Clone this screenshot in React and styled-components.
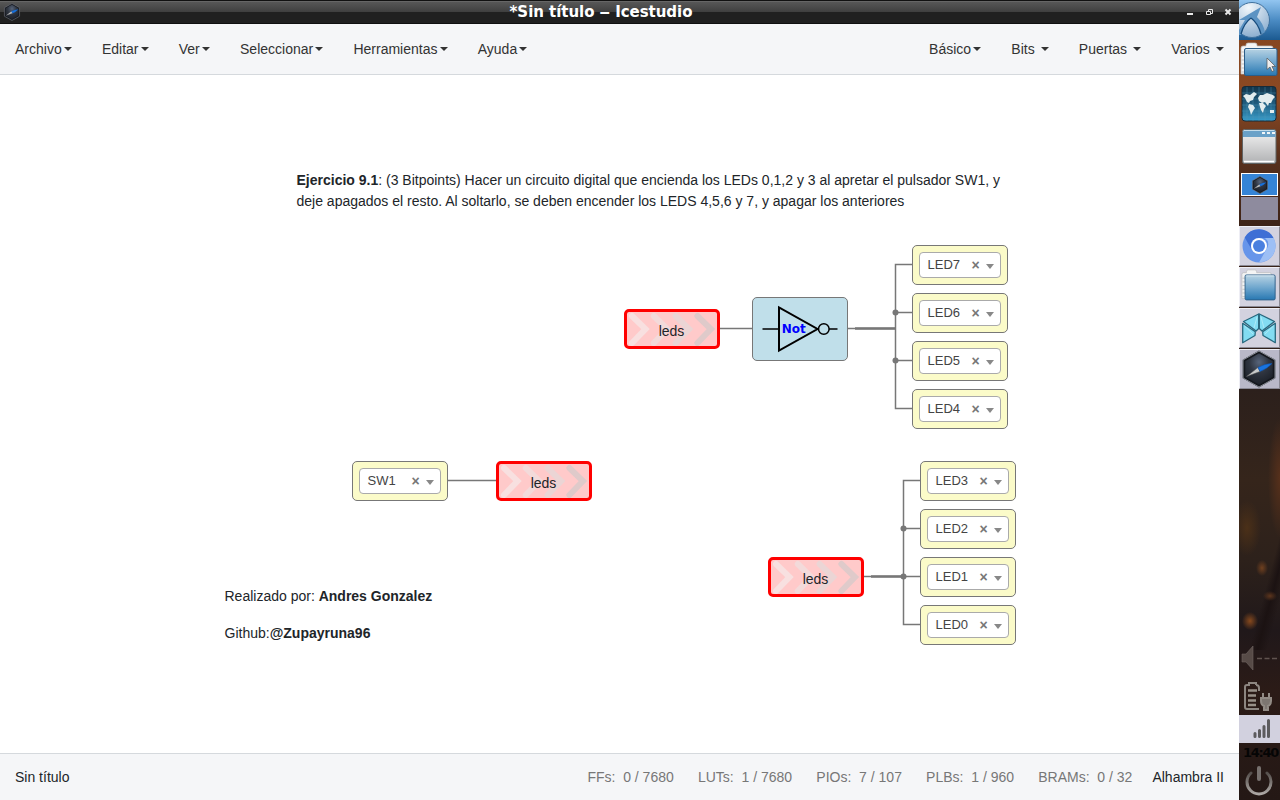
import React from "react";
import styled, { createGlobalStyle } from "styled-components";

const GlobalStyle = createGlobalStyle`
  * { box-sizing: border-box; }
  html, body, #root { margin: 0; height: 100%; overflow: hidden; }
  body {
    font-family: "Liberation Sans", Arial, sans-serif;
    font-size: 14px;
    line-height: 20px;
    color: #212529;
    background: #fff;
  }
`;

const Desktop = styled.div`
  display: flex;
  width: 1280px;
  height: 800px;
`;

const Window = styled.div`
  display: flex;
  flex-direction: column;
  width: 1239px;
  height: 800px;
  background: #fff;
`;

const TitleBar = styled.header`
  display: flex;
  align-items: center;
  height: 24px;
  padding: 0 7px 0 3px;
  background: linear-gradient(#111 0, #111 1px, #757575 1px, #575757 2px, #3f3f3f 12px, #202020 12px, #202020 23px, #101010 23px);
`;

const Title = styled.h1`
  flex: 1;
  margin: 0;
  padding-right: 5px;
  text-align: center;
  font: bold 15px/22px "DejaVu Sans", sans-serif;
  letter-spacing: -0.04px;
  color: #fff;
  white-space: pre;
`;

const WindowControls = styled.div`
  display: flex;
  width: 46px;
  height: 24px;
`;

const MenuBar = styled.nav`
  display: flex;
  justify-content: space-between;
  height: 51px;
  background: #f5f6f8;
  border-bottom: 1px solid #d5d9dd;
`;

const MenuGroup = styled.div`
  display: flex;
`;

const MenuItem = styled.div`
  display: flex;
  align-items: center;
  padding: 0 15px;
  color: #333;
  white-space: pre;

  &::after {
    content: "";
    margin-left: 2.25px;
    border: 4px solid transparent;
    border-top-color: #333;
    border-bottom: 0;
  }
`;

const Canvas = styled.main`
  position: relative;
  flex: 1;
  overflow: hidden;
`;

const Wires = styled.svg`
  position: absolute;
  inset: 0;
`;

const Placed = styled.div`
  position: absolute;
  left: ${(p) => p.$x}px;
  top: ${(p) => p.$y}px;
`;

const Note = styled.div`
  line-height: 21px;
  white-space: nowrap;
  p { margin: 0 0 16px; }
`;

const PinFrame = styled.div`
  width: 96px;
  height: 40px;
  padding: 6px;
  background: #fbfbc9;
  border: 1px solid #777;
  border-radius: 5px;
`;

const PinSelect = styled.div`
  display: flex;
  align-items: center;
  height: 26px;
  padding: 0 6px 0 7.5px;
  background: #fff;
  border: 1px solid #aaa;
  border-radius: 4px;
  font-size: 13px;
  color: #444;
`;

const PinName = styled.span`
  flex: 1;
`;

const Clear = styled.span`
  margin-right: 6.3px;
  font-size: 14px;
  font-weight: bold;
  color: #777;
`;

const Arrow = styled.span`
  margin-top: 3px;
  border: 4px solid transparent;
  border-top: 5px solid #888;
  border-bottom: 0;
`;

const LabelFrame = styled.div`
  display: grid;
  width: 96px;
  height: 40px;
  border: 3px solid #f00;
  border-radius: 5px;
  background: #ffcaca;
  overflow: hidden;
  > * { grid-area: 1 / 1; }
`;

const LabelText = styled.span`
  padding-top: 9px;
  padding-right: 1px;
  text-align: center;
`;

const GateFrame = styled.div`
  width: 96px;
  height: 64px;
  background: #c0dfea;
  border: 1px solid #777;
  border-radius: 5px;
`;

const StatusBar = styled.footer`
  display: flex;
  align-items: center;
  height: 47px;
  padding: 0 15px;
  background: #f5f6f8;
  border-top: 1px solid #d5d9dd;
`;

const FileName = styled.span`
  flex: 1;
`;

const Stats = styled.div`
  display: flex;
  gap: 24.2px;
  margin-right: 20px;
  color: #777;
  white-space: pre;
`;

const Dock = styled.aside`
  display: flex;
  flex-direction: column;
  width: 41px;
  height: 800px;
  background:
    radial-gradient(ellipse 6px 8px at 23px 568px, #70401f, transparent),
    radial-gradient(ellipse 7px 5px at 31px 596px, #5e361d, transparent),
    radial-gradient(ellipse 8px 9px at 11px 621px, #87491d, transparent),
    radial-gradient(ellipse 14px 28px at 8px 528px, #4b3018, transparent),
    radial-gradient(ellipse 12px 60px at 41px 478px, #57301b, transparent),
    linear-gradient(105deg, transparent 62%, #1b1212 72%, transparent 84%) 0 500px / 41px 150px no-repeat,
    linear-gradient(#84451f 0, #8b4923 100px, #57301d 160px, #3d2317 225px, #2c201c 390px, #35251b 480px, #2d211b 560px, #20181a 630px, #2b1b17 690px, #241815 800px);
`;

const DockCell = styled.div`
  flex: none;
  height: ${(p) => p.$h}px;
  background: ${(p) => p.$bg || "transparent"};
  svg { display: block; }
`;

const Pager = styled.div`
  display: flex;
  flex-direction: column;
  gap: 1px;
  height: 55px;
  padding: 2px 2px 0;
`;

const Workspace = styled.div`
  display: flex;
  align-items: center;
  justify-content: center;
  width: 37px;
  height: 23px;
  background: ${(p) => (p.$active ? "#3584d6" : "#8e8b9e")};
  border: ${(p) => (p.$active ? "1px solid #fff" : "0")};
`;

const Task = styled.div`
  flex: none;
  width: 41px;
  height: 40px;
  margin-bottom: 1px;
  background: ${(p) => (p.$active ? "#b9b8c8" : "#d3d2df")};
  border: 1px solid #eeeef5;
  border-right-color: #8a8994;
  border-bottom-color: #8a8994;
  svg { display: block; }
`;

const Spacer = styled.div`
  flex: 1;
`;

const Clock = styled.div`
  height: 20px;
  padding-left: 4px;
  font: bold 13px/19px "DejaVu Sans", sans-serif;
  letter-spacing: -1.3px;
  color: #050505;
  white-space: nowrap;
`;

function Compass({ size, id }) {
  return (
    <svg width={size} height={size} viewBox="0 0 38 38">
      <defs>
        <radialGradient id={id} cx=".5" cy=".3" r=".65">
          <stop offset="0" stopColor="#57647a" />
          <stop offset=".5" stopColor="#2f3540" />
          <stop offset="1" stopColor="#1d2129" />
        </radialGradient>
      </defs>
      <path d="M19 2 34 10.500V27.500L19 36 4 27.500V10.500Z" fill={`url(#${id})`} stroke="#15181e" strokeWidth="2.500" />
      <path d="M19 1 35 10V28L19 37 3 28V10Z" fill="none" stroke="#8b8f98" strokeWidth="1" />
      <path d="M6.500 26.500 18 17.500 20 21.500Z" fill="#c8cacb" stroke="#555" strokeWidth=".5" />
      <path d="M18 17.500Q25 13.500 32 13.500 27 19 20 21.500Z" fill="#1974df" stroke="#0c4fa8" strokeWidth=".5" />
    </svg>
  );
}

function FolderDrawing({ cursor, id, size = 40 }) {
  return (
    <svg width={size} height={size} viewBox="0 0 40 40">
      <defs>
        <linearGradient id={id} x2="0" y2="1">
          <stop offset="0" stopColor="#b9d4e4" />
          <stop offset=".5" stopColor="#70a7ce" />
          <stop offset="1" stopColor="#2878b2" />
        </linearGradient>
      </defs>
      <path d="M2 33V7q0-2 2-2h3V4q0-2 2-2h7q2 0 2 2v1h14q2 0 2 2v26H4Z" fill="#f4f4f4" stroke="#bbb" strokeWidth=".7" />
      <path d="M2.500 11h3M2.500 15h3M2.500 19h3M2.500 23h3M2.500 27h3M2.500 31h3" stroke="#c5c5c5" />
      <rect x="5.500" y="7.500" width="32.500" height="27" rx="1.500" fill={`url(#${id})`} stroke="#2c5d88" />
      <path d="M7 8.500h29.500" stroke="#d8e9f4" />
      {cursor && <path d="m28 17 0 11.500 3-2.500 2 4.500 2-1-2-4h3.500Z" fill="#eee" stroke="#555" strokeWidth=".7" />}
    </svg>
  );
}

function StartLogo() {
  return (
    <svg width="41" height="40" viewBox="0 0 41 40">
      <defs>
        <linearGradient id="startBg" x2="0" y2="1">
          <stop offset="0" stopColor="#92c5f0" />
          <stop offset=".5" stopColor="#4b8cc4" />
          <stop offset="1" stopColor="#1b5a91" />
        </linearGradient>
        <radialGradient id="startDisc" cx=".4" cy=".15" r=".9">
          <stop offset="0" stopColor="#f2f7fb" />
          <stop offset="1" stopColor="#86aacd" />
        </radialGradient>
      </defs>
      <rect width="41" height="40" fill="url(#startBg)" />
      <circle cx="13" cy="20" r="17.500" fill="url(#startDisc)" stroke="#3f719e" />
      <path d="M0 20 22 7 18 17Q24 23 26 32L22 34Q19 23 12 18 5 23 2 35L0 35V30L6 20Z" fill="#5c93c3" />
      <path d="M12 18Q19 23 22 34M12 18Q5 23 2 34" fill="none" stroke="#174c7d" strokeWidth="1.300" />
    </svg>
  );
}

function GlobeDrawing() {
  return (
    <svg width="40" height="42" viewBox="0 0 40 42">
      <defs>
        <linearGradient id="globeBg" x2="0" y2="1">
          <stop offset="0" stopColor="#123449" />
          <stop offset=".5" stopColor="#205c7e" />
          <stop offset="1" stopColor="#389dcb" />
        </linearGradient>
      </defs>
      <rect x="3" y="4.500" width="34" height="34.500" rx="3" fill="url(#globeBg)" stroke="#152b39" />
      <path d="M8 5v34M14 5v34M20 5v34M26 5v34M32 5v34M3 11h34M3 17h34M3 23h34M3 29h34M3 35h34" stroke="#5097b7" strokeWidth=".4" />
      <path d="M4 14l3-2 4 1 4-3 3 2-3 3-1 3-3 1-1 2-2-1-2-4ZM10 22l4 1 2 3-2 3-2 4-1-4-2-4ZM19 16l2-3 3 0 4-2 6 2 2 2-2 2-2 4-2 0-1 3-3-4-3 1-3-2ZM20 21l4 0 3 3-2 3-1 4-2-3-1-3ZM31 28l4 0 0 3-4 0Z" fill="#e2edef" />
    </svg>
  );
}

function WindowDrawing() {
  return (
    <svg width="40" height="45" viewBox="0 0 40 45">
      <defs>
        <linearGradient id="paneBg" x2="0" y2="1">
          <stop offset="0" stopColor="#f5f5f5" />
          <stop offset="1" stopColor="#b0b1b3" />
        </linearGradient>
      </defs>
      <rect x="3.500" y="4.500" width="33.500" height="34" rx="2" fill="url(#paneBg)" stroke="#5e6263" />
      <path d="M4 12V7q0-2 2-2h28.500q2 0 2 2v5Z" fill="#6aa1c8" />
      <path d="M5 5.500h30" stroke="#c4dcea" />
      <path d="M23 8h3m2 0h3m2 0h3" stroke="#f2f6f8" strokeWidth="2" />
      <path d="M5 36.500h30" stroke="#fff" strokeWidth="1.500" />
    </svg>
  );
}

function BrowserDrawing() {
  return (
    <svg width="39" height="38" viewBox="0 0 39 38">
      <circle cx="19" cy="19" r="16.500" fill="#6795ea" />
      <path d="M4.700 10.500A16.500 16.500 0 0 1 33.500 11H19a8 8 0 0 0-7 12Z" fill="#3e6fd5" />
      <path d="M33.500 11A16.500 16.500 0 0 1 19 35.500L26 23a8 8 0 0 0-1-12Z" fill="#9dbff5" />
      <circle cx="19" cy="19" r="8" fill="#fff" />
      <circle cx="19" cy="19" r="6" fill="#4b80df" />
    </svg>
  );
}

function PanelsDrawing() {
  return (
    <svg width="39" height="38" viewBox="0 0 39 38">
      <g fill="#83dcf2" stroke="#28687e" strokeWidth="1.300" strokeLinejoin="round">
        <path d="M2.700 14.300 15.300 22.700 15 26.500 2.700 33.700Z" />
        <path d="M3.500 12.500 18.700 5V19.500L16 22Z" />
        <path d="M19.300 5 34.500 12.500 22 22 19.300 19.500Z" />
        <path d="M35.300 14.300V33.700L23 26.500 22.700 22.700Z" />
      </g>
      <path d="M4.500 17 13 25M17 8l-3 11M21 8l3 11M33.500 17 25 25" stroke="#b8edf7" strokeWidth=".8" />
    </svg>
  );
}

function VolumeDrawing() {
  return (
    <svg width="41" height="38" viewBox="0 0 41 38">
      <path d="M3 14h4l7-8v24l-7-8H3Z" fill="#574b47" stroke="#716663" strokeWidth=".6" />
      <path d="M18 18.500h20" stroke="#60534f" strokeWidth="1.500" strokeDasharray="5 2.500" />
    </svg>
  );
}

function BatteryDrawing() {
  return (
    <svg width="41" height="37" viewBox="0 0 41 37">
      <path d="M17 7V5H10v2H8q-2 0-2 2v20q0 2 2 2h12M17 7q3 0 3 3v3" fill="none" stroke="#8d8681" strokeWidth="2" />
      <path d="M9 12.500h9M9 17.500h8M9 22.500h8M9 27h8" stroke="#989088" strokeWidth="2.500" />
      <path d="M22 20h10v3q0 4-3 5v4h-4v-4q-3-1-3-5ZM24 19v-4m6 4v-4" fill="#7d7671" stroke="#928b85" strokeWidth="2" />
    </svg>
  );
}

function SignalDrawing() {
  return (
    <svg width="41" height="28" viewBox="0 0 41 28">
      <path d="M16 21.500v-3M20.500 21.500v-6M25 21.500V11.500M29.500 21.500V5.500" stroke="#5c5b5e" strokeWidth="3" strokeLinecap="round" />
    </svg>
  );
}

function PowerDrawing() {
  return (
    <svg width="41" height="37" viewBox="0 0 41 37">
      <defs>
        <linearGradient id="powerMetal" x2="0" y2="1">
          <stop offset="0" stopColor="#554f4c" />
          <stop offset="1" stopColor="#aca7a4" />
        </linearGradient>
      </defs>
      <path d="M12 10a12 12 0 1 0 16 0" fill="none" stroke="url(#powerMetal)" strokeWidth="3" strokeLinecap="round" />
      <rect x="18" y="3" width="4" height="15" rx="2" fill="#77716e" />
    </svg>
  );
}

function Pin({ x, y, name }) {
  return (
    <Placed $x={x} $y={y}>
      <PinFrame>
        <PinSelect>
          <PinName>{name}</PinName>
          <Clear>×</Clear>
          <Arrow />
        </PinSelect>
      </PinFrame>
    </Placed>
  );
}

const chevronColours = ["#f8e0e0", "#f3dada", "#ebd5d5", "#dfcaca"];

function Label({ x, y }) {
  return (
    <Placed $x={x} $y={y}>
      <LabelFrame>
        <svg width="90" height="34" viewBox="0 0 90 34">
          {chevronColours.map((c, i) => (
            <path key={c} d={`M${5 + i * 21.8} 4 L${18.5 + i * 21.8} 17 L${5 + i * 21.8} 31`} fill="none" stroke={c} strokeWidth="6" strokeLinecap="round" />
          ))}
        </svg>
        <LabelText>leds</LabelText>
      </LabelFrame>
    </Placed>
  );
}

function NotGate({ x, y }) {
  return (
    <Placed $x={x} $y={y}>
      <GateFrame>
        <svg width="94" height="62" viewBox="1 1 94 62">
          <g fill="none" stroke="#000">
            <path d="M27 10.500V53.500L65.500 32Z" strokeWidth="2" />
            <path d="M10.500 32H27M77 32h8.500" strokeWidth="1.500" />
            <circle cx="71.800" cy="32" r="5.300" strokeWidth="1.500" />
          </g>
          <text x="29.800" y="36" fill="#00f" fontFamily="DejaVu Sans" fontSize="12" fontWeight="bold">Not</text>
        </svg>
      </GateFrame>
    </Placed>
  );
}

const leftMenus = ["Archivo", "Editar", "Ver", "Seleccionar", "Herramientas", "Ayuda"];
const rightMenus = ["Básico", "Bits ", "Puertas ", "Varios "];
const stats = ["FFs:  0 / 7680", "LUTs:  1 / 7680", "PIOs:  7 / 107", "PLBs:  1 / 960", "BRAMs:  0 / 32"];
const pins = [
  { name: "LED7", x: 912, y: 170 },
  { name: "LED6", x: 912, y: 218 },
  { name: "LED5", x: 912, y: 266 },
  { name: "LED4", x: 912, y: 314 },
  { name: "SW1", x: 352, y: 386 },
  { name: "LED3", x: 920, y: 386 },
  { name: "LED2", x: 920, y: 434 },
  { name: "LED1", x: 920, y: 482 },
  { name: "LED0", x: 920, y: 530 },
];

export default function App() {
  return (
    <Desktop>
      <GlobalStyle />
      <Window>
        <TitleBar>
          <Compass size={18} id="titleCompass" />
          <Title>*Sin título ‒ Icestudio</Title>
          <WindowControls>
            <svg width="46" height="24" viewBox="1186 0 46 24" fill="none" stroke="#e8e8e8">
              <path d="M1187 14h6" strokeWidth="2" />
              <path d="M1208.500 11.500v-2h4v4h-2M1206.500 11.500h4v3h-4Z" />
              <path d="m1225.500 9.500 5 5m0-5-5 5" strokeWidth="2" />
            </svg>
          </WindowControls>
        </TitleBar>
        <MenuBar>
          <MenuGroup>{leftMenus.map((m) => <MenuItem key={m}>{m}</MenuItem>)}</MenuGroup>
          <MenuGroup>{rightMenus.map((m) => <MenuItem key={m}>{m}</MenuItem>)}</MenuGroup>
        </MenuBar>
        <Canvas>
          <Wires width="1239" height="678" viewBox="0 75 1239 678">
            <g fill="none" stroke="#777" strokeWidth="1.500">
              <path d="M720 328.500H752M848 328.500H896M448 480.500H496M864 576.500H920" />
              <path d="M912 264.500H895.500V408.500H912M895.500 312.500H912M895.500 360.500H912" />
              <path d="M920 480.500H903.500V624.500H920M903.500 528.500H920" />
              <path d="M855 328.500H896M871 576.500H904" strokeWidth="2.500" />
            </g>
            <g fill="#777">
              <circle cx="895.500" cy="312.500" r="3" />
              <circle cx="895.500" cy="360.500" r="3" />
              <circle cx="903.500" cy="528.500" r="3" />
              <circle cx="903.500" cy="576.500" r="3" />
            </g>
          </Wires>
          <Placed $x={296.5} $y={95}>
            <Note>
              <b>Ejercicio 9.1</b>: (3 Bitpoints) Hacer un circuito digital que encienda los LEDs 0,1,2 y 3 al apretar el pulsador SW1, y
              <br />
              deje apagados el resto. Al soltarlo, se deben encender los LEDS 4,5,6 y 7, y apagar los anteriores
            </Note>
          </Placed>
          <Placed $x={224.5} $y={511}>
            <Note>
              <p>Realizado por: <b>Andres Gonzalez</b></p>
              <p>Github:<b>@Zupayruna96</b></p>
            </Note>
          </Placed>
          {pins.map((p) => <Pin key={p.name} {...p} />)}
          <Label x={624} y={234} />
          <Label x={496} y={386} />
          <Label x={768} y={482} />
          <NotGate x={752} y={222} />
        </Canvas>
        <StatusBar>
          <FileName>Sin título</FileName>
          <Stats>{stats.map((s) => <span key={s}>{s}</span>)}</Stats>
          <span>Alhambra II</span>
        </StatusBar>
      </Window>
      <Dock>
        <DockCell $h={41}><StartLogo /></DockCell>
        <DockCell $h={41}><FolderDrawing id="launcherFolder" cursor /></DockCell>
        <DockCell $h={43}><GlobeDrawing /></DockCell>
        <DockCell $h={46}><WindowDrawing /></DockCell>
        <Pager>
          <Workspace $active><Compass size={18} id="pagerCompass" /></Workspace>
          <Workspace />
        </Pager>
        <Task><BrowserDrawing /></Task>
        <Task><FolderDrawing id="taskFolder" size={37} /></Task>
        <Task><PanelsDrawing /></Task>
        <Task $active><Compass size={38} id="taskCompass" /></Task>
        <Spacer />
        <DockCell $h={38}><VolumeDrawing /></DockCell>
        <DockCell $h={37}><BatteryDrawing /></DockCell>
        <DockCell $h={28} $bg="#d2d1df"><SignalDrawing /></DockCell>
        <Clock>14:40</Clock>
        <DockCell $h={37}><PowerDrawing /></DockCell>
      </Dock>
    </Desktop>
  );
}
